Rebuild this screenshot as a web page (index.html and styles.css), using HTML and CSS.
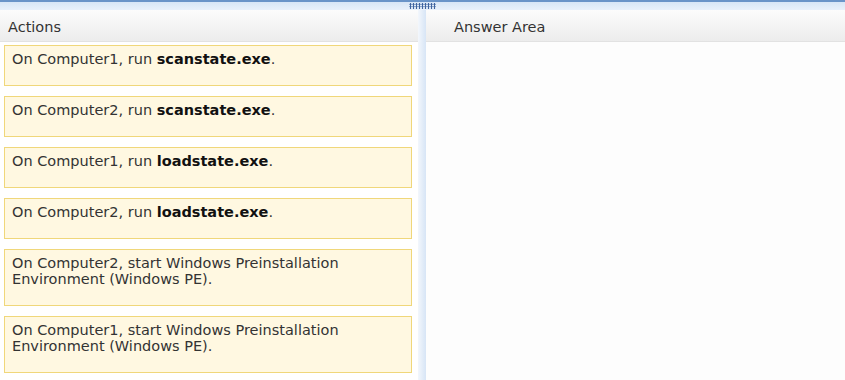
FILE: index.html
```html
<!DOCTYPE html>
<html lang="en">
<head>
    <meta charset="UTF-8">
    <title>Actions / Answer Area</title>
    <link rel="stylesheet" href="styles.css">
</head>
<body>

<div class="topbar">
    <div class="grip"></div>
</div>

<div class="panes">
    <div class="pane actions">
        <div class="pane_head">Actions</div>
        <ul class="items">
            <li>On Computer1, run <b>scanstate.exe</b>.</li>
            <li>On Computer2, run <b>scanstate.exe</b>.</li>
            <li>On Computer1, run <b>loadstate.exe</b>.</li>
            <li>On Computer2, run <b>loadstate.exe</b>.</li>
            <li>On Computer2, start Windows Preinstallation Environment (Windows PE).</li>
            <li>On Computer1, start Windows Preinstallation Environment (Windows PE).</li>
        </ul>
    </div>
    <div class="splitter"></div>
    <div class="pane answer">
        <div class="pane_head">Answer Area</div>
        <div class="drop"></div>
    </div>
</div>

</body>
</html>
```

FILE: styles.css
```css
*{
    margin: 0;
    padding: 0;
}
body{
    font-family: "DejaVu Sans", Verdana, sans-serif;
    font-size: 14.5px;
    color: #333;
    background-color: #fff;
    width: 845px;
    height: 380px;
    overflow: hidden;
}
.topbar{
    height: 8px;
    border-top: 2px solid #6a94c8;
    background: linear-gradient(#d8e6f6, #e9f1fb);
    display: flex;
    justify-content: center;
}
.grip{
    width: 27px;
    height: 6px;
    margin-top: 1px;
    background-image: radial-gradient(circle, #3f64a0 0.9px, transparent 1.3px);
    background-size: 3px 2.5px;
}
.panes{
    display: flex;
    height: 370px;
}
.pane{
    display: flex;
    flex-direction: column;
}
.actions{
    width: 418px;
}
.answer{
    flex: 1;
    background-color: #fdfdfd;
}
.splitter{
    width: 8px;
    background: linear-gradient(to right, #f3f7fc, #e2ecf8 60%, #d7e5f6);
}
.pane_head{
    height: 29px;
    padding-top: 2px;
    line-height: 30px;
    padding-left: 8px;
    font-size: 14.5px;
    color: #333;
    background: linear-gradient(#fcfcfc, #ececec);
    border-bottom: 1px solid #e2e2e2;
}
.answer .pane_head{
    padding-left: 28px;
}
.items{
    list-style: none;
    padding: 3px 6px 0 4px;
    display: flex;
    flex-direction: column;
    gap: 10px;
}
.items li{
    background-color: #fff8e1;
    border: 1px solid #f0d77a;
    padding: 5px 8px 18px 7px;
    line-height: 16px;
    color: #333;
}
.items li b{
    color: #111;
}
```
